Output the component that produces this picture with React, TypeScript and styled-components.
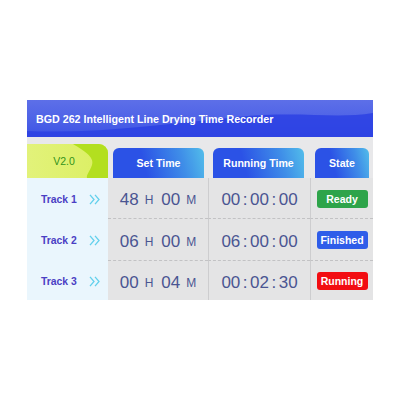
import React from 'react';
import styled, { createGlobalStyle } from 'styled-components';

const Global = createGlobalStyle`
  html, body { margin: 0; padding: 0; background: #ffffff; }
  body { font-family: "Liberation Sans", Arial, Helvetica, sans-serif; }
`;

const Page = styled.div`
  width: 400px;
  height: 400px;
  box-sizing: border-box;
  padding: 100px 27px 0;
`;

const Panel = styled.div`
  width: 346px;
  height: 200px;
  display: flex;
  flex-direction: column;
  background: #e8e8ea;
`;

const Header = styled.header`
  position: relative;
  height: 37px;
  flex: none;
  overflow: hidden;
  display: flex;
  align-items: center;
  padding-left: 9px;
  background: linear-gradient(180deg, #5d6fe8 0%, #4d62e7 55%, #3c52e5 100%);
`;

const HeaderWave = styled.svg`
  position: absolute;
  inset: 0;
  width: 100%;
  height: 100%;
`;

const Title = styled.h1`
  position: relative;
  margin: 0;
  font-size: 10.7px;
  font-weight: 700;
  color: #ffffff;
`;

const Grid = styled.div`
  flex: 1;
  display: grid;
  grid-template-columns: 81px 100px 102px 63px;
  grid-template-rows: 41px 40px 42px 40px;
`;

const TabSlot = styled.div`
  display: flex;
  align-items: flex-end;
`;

const VersionTab = styled.div`
  position: relative;
  width: 81px;
  height: 34px;
  border-top-right-radius: 9px;
  overflow: hidden;
  background: linear-gradient(90deg, #e2f27a 0%, #dbef62 100%);
  display: flex;
  align-items: center;
  justify-content: center;
`;

const VersionWave = styled.svg`
  position: absolute;
  inset: 0;
  width: 100%;
  height: 100%;
`;

const VersionText = styled.span`
  position: relative;
  font-size: 10.5px;
  color: #34931a;
  margin-left: -7px;
`;

const ColumnTab = styled.div<{ $w: number }>`
  width: ${(p) => p.$w}px;
  height: 30px;
  margin-left: 5px;
  border-radius: 6px 6px 0 0;
  background: linear-gradient(75deg, #2b52e6 35%, #3f8ee8 75%, #52bdea 100%);
  display: flex;
  align-items: center;
  justify-content: center;
  color: #ffffff;
  font-size: 10.6px;
  font-weight: 700;
`;

const TrackCell = styled.div`
  background: #eaf6fd;
  display: flex;
  align-items: center;
  justify-content: space-between;
  padding: 0 7px 0 14px;
`;

const TrackLabel = styled.span`
  font-size: 10.4px;
  font-weight: 700;
  color: #4a3fc4;
  margin-top: 3px;
`;

const Chevrons = styled.svg`
  width: 12px;
  height: 11px;
  margin-top: 3px;
`;

const Cell = styled.div<{ $first?: boolean; $divider?: boolean }>`
  background: #e4e4e5;
  display: flex;
  align-items: center;
  justify-content: center;
  border-top: ${(p) => (p.$first ? 'none' : '1px dashed #c2c2c4')};
  border-left: ${(p) => (p.$divider ? '1px solid #cdcdcf' : 'none')};
  color: #4a5592;
  box-sizing: border-box;
  padding-top: 4px;
`;

const Digits = styled.span`
  font-size: 17px;
`;

const Unit = styled.span<{ $gap: number }>`
  font-size: 12px;
  margin: 0 ${(p) => p.$gap}px 0 6px;
`;

const Colon = styled.span`
  font-size: 17px;
  margin: 0 2.5px;
`;

const Badge = styled.span<{ $color: string }>`
  width: 51px;
  height: 18px;
  border-radius: 3px;
  background: ${(p) => p.$color};
  color: #ffffff;
  font-size: 10.5px;
  font-weight: 700;
  display: flex;
  align-items: center;
  justify-content: center;
  margin-top: -3px;
`;

type Row = {
  track: string;
  h: string;
  m: string;
  run: [string, string, string];
  state: string;
  color: string;
};

const rows: Row[] = [
  { track: 'Track 1', h: '48', m: '00', run: ['00', '00', '00'], state: 'Ready', color: '#2ea44a' },
  { track: 'Track 2', h: '06', m: '00', run: ['06', '00', '00'], state: 'Finished', color: '#2f5de9' },
  { track: 'Track 3', h: '00', m: '04', run: ['00', '02', '30'], state: 'Running', color: '#f20d12' },
];

const ChevronIcon = () => (
  <Chevrons viewBox="0 0 12 11">
    <polyline points="1,0.8 5,5.5 1,10.2" fill="none" stroke="#63d0ec" strokeWidth="1.3" />
    <polyline points="6,0.8 10,5.5 6,10.2" fill="none" stroke="#63d0ec" strokeWidth="1.3" />
  </Chevrons>
);

export default function App() {
  return (
    <>
      <Global />
      <Page>
        <Panel>
          <Header>
            <HeaderWave viewBox="0 0 346 37" preserveAspectRatio="none">
              <path
                d="M0 37 L0 31 C 70 34, 140 24, 210 17 C 270 11, 310 19, 346 13 L346 37 Z"
                fill="#2b41e3"
                opacity="0.85"
              />
            </HeaderWave>
            <Title>BGD 262 Intelligent Line Drying Time Recorder</Title>
          </Header>
          <Grid>
            <TabSlot>
              <VersionTab>
                <VersionWave viewBox="0 0 81 34" preserveAspectRatio="none">
                  <path
                    d="M46 0 C 56 6, 68 13, 65 21 C 63 27, 59 31, 60 34 L81 34 L81 0 Z"
                    fill="#b3df1f"
                  />
                </VersionWave>
                <VersionText>V2.0</VersionText>
              </VersionTab>
            </TabSlot>
            <TabSlot>
              <ColumnTab $w={91}>Set Time</ColumnTab>
            </TabSlot>
            <TabSlot>
              <ColumnTab $w={91}>Running Time</ColumnTab>
            </TabSlot>
            <TabSlot>
              <ColumnTab $w={54}>State</ColumnTab>
            </TabSlot>
            {rows.map((r, i) => (
              <React.Fragment key={r.track}>
                <TrackCell>
                  <TrackLabel>{r.track}</TrackLabel>
                  <ChevronIcon />
                </TrackCell>
                <Cell $first={i === 0}>
                  <Digits>{r.h}</Digits>
                  <Unit $gap={8}>H</Unit>
                  <Digits>{r.m}</Digits>
                  <Unit $gap={0}>M</Unit>
                </Cell>
                <Cell $first={i === 0} $divider>
                  <Digits>{r.run[0]}</Digits>
                  <Colon>:</Colon>
                  <Digits>{r.run[1]}</Digits>
                  <Colon>:</Colon>
                  <Digits>{r.run[2]}</Digits>
                </Cell>
                <Cell $first={i === 0} $divider>
                  <Badge $color={r.color}>{r.state}</Badge>
                </Cell>
              </React.Fragment>
            ))}
          </Grid>
        </Panel>
      </Page>
    </>
  );
}
